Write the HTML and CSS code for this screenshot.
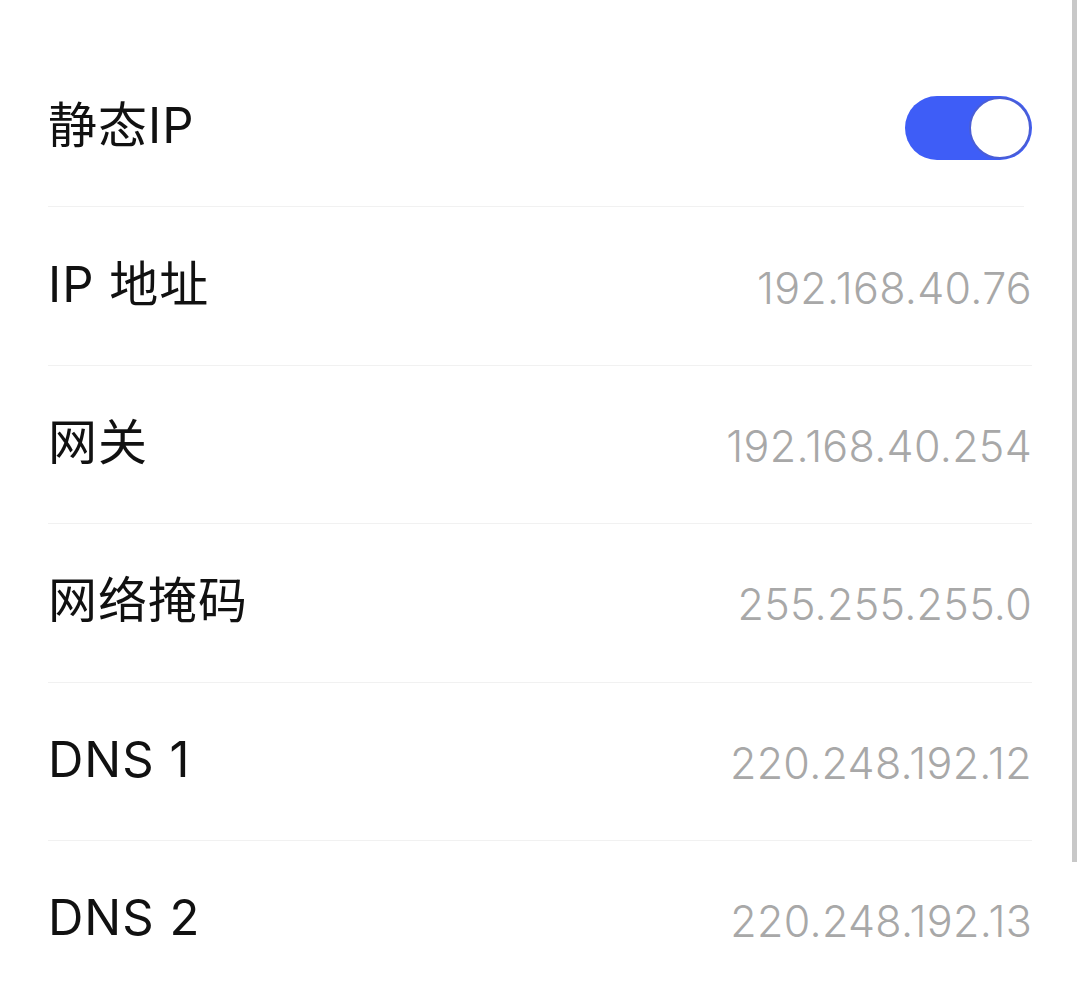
FILE: index.html
```html
<!DOCTYPE html>
<html lang="zh-CN">
<head>
<meta charset="utf-8">
<title>静态IP</title>
<link rel="stylesheet" href="styles.css">
</head>
<body>
<div class="screen">
  <div class="list">
    <div class="row">
      <span class="label">静态IP</span>
      <span class="switch"><span class="knob"></span></span>
    </div>
    <div class="row">
      <span class="label">IP 地址</span>
      <span class="value">192.168.40.76</span>
    </div>
    <div class="row">
      <span class="label">网关</span>
      <span class="value">192.168.40.254</span>
    </div>
    <div class="row">
      <span class="label">网络掩码</span>
      <span class="value">255.255.255.0</span>
    </div>
    <div class="row">
      <span class="label">DNS 1</span>
      <span class="value">220.248.192.12</span>
    </div>
    <div class="row last">
      <span class="label">DNS 2</span>
      <span class="value">220.248.192.13</span>
    </div>
  </div>
  <div class="scrollbar"></div>
</div>
</body>
</html>
```
FILE: styles.css
```css
html, body {
  margin: 0;
  padding: 0;
  background: #ffffff;
}
.screen {
  position: relative;
  width: 1078px;
  height: 984px;
  overflow: hidden;
  background: #ffffff;
  font-family: Inter, "Noto Sans CJK SC", sans-serif;
}
.list {
  display: flex;
  flex-direction: column;
  padding: 49px 46px 0 48px;
}
.row {
  display: flex;
  align-items: center;
  justify-content: space-between;
  height: 157.4px;
  border-bottom: 1px solid #f1f1f1;
  margin-right: 8px;
}
.row + .row {
  margin-right: 0;
}
.row.last {
  border-bottom: none;
}
.label {
  font-size: 49px;
  line-height: 1;
  color: #111111;
  font-weight: 400;
  letter-spacing: 1px;
  position: relative;
  top: -2px;
}
.value {
  font-size: 43px;
  line-height: 1;
  color: #a8a8a8;
  font-weight: 300;
  letter-spacing: 0.3px;
  position: relative;
  top: 2px;
}
.switch {
  position: relative;
  display: block;
  width: 127px;
  height: 64px;
  border-radius: 32px;
  background: #3e5df7;
  margin-right: -8px;
}
.knob {
  position: absolute;
  right: 1px;
  top: 1px;
  width: 58px;
  height: 58px;
  border-radius: 50%;
  background: #ffffff;
  border: 2px solid #4a5ed6;
}
.scrollbar {
  position: absolute;
  top: 0;
  right: 1px;
  width: 5px;
  height: 862px;
  background: #c8c8c8;
}
```
